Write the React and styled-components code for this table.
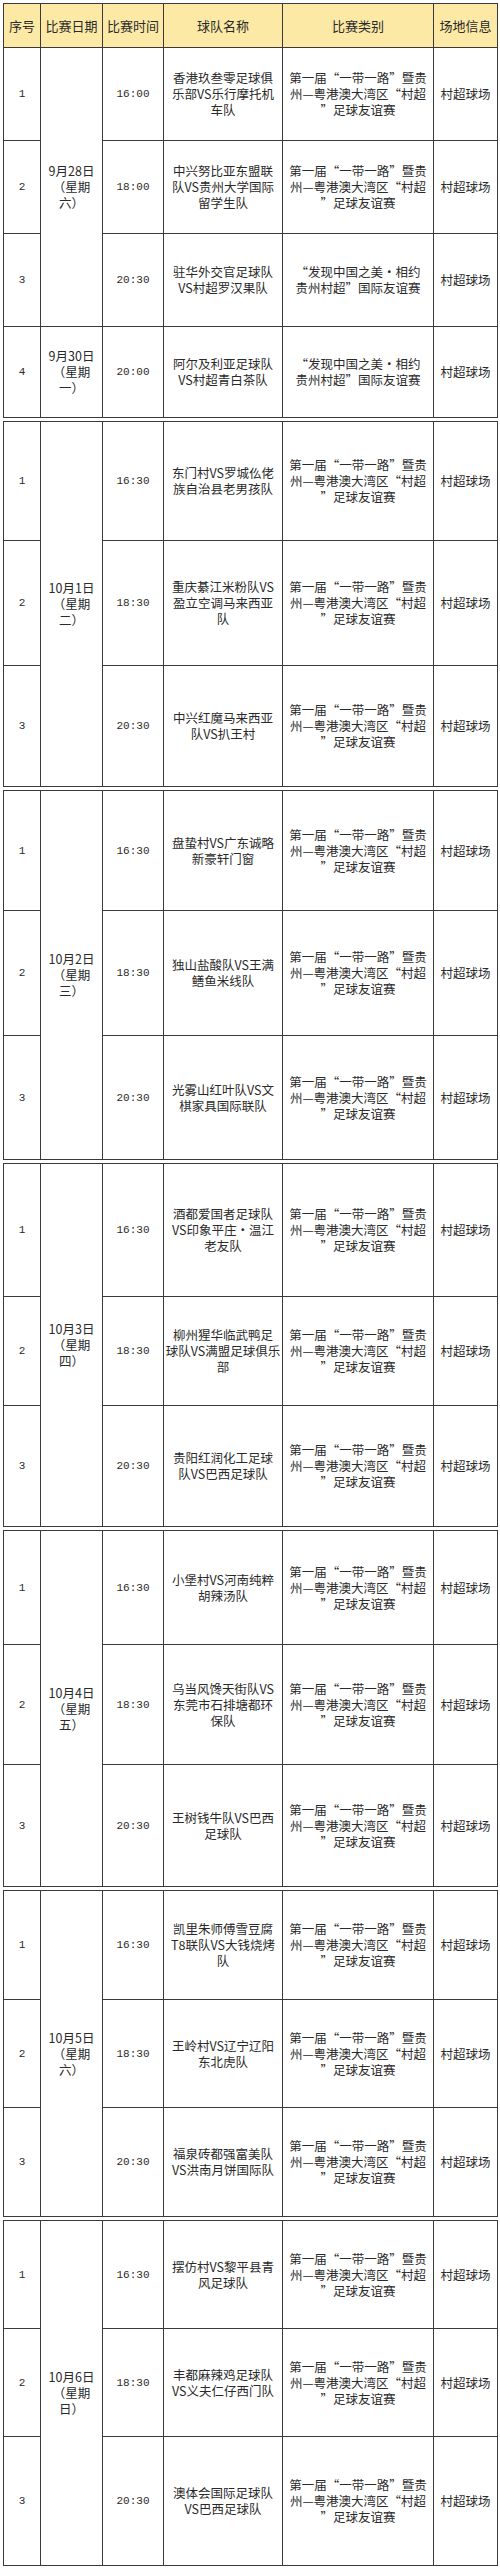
import React from "react";
import styled, { createGlobalStyle } from "styled-components";

const GlobalStyle = createGlobalStyle`
  html, body {
    margin: 0;
    padding: 0;
    background: #fff;
  }
  body {
    font-family: "Noto Sans CJK SC", "Liberation Sans", sans-serif;
    color: #2a2a2a;
  }
`;

const CAT_A = "第一届“一带一路”暨贵\n州—粤港澳大湾区“村超\n”足球友谊赛";
const CAT_B = "“发现中国之美·相约\n贵州村超”国际友谊赛";
const VENUE = "村超球场";

const sections = [
  {
    header: true,
    rows: [93, 93, 93, 91],
    groups: [
      {
        date: "9月28日\n（星期\n六）",
        matches: [
          ["1", "16:00", "香港玖叁零足球俱\n乐部VS乐行摩托机\n车队", CAT_A],
          ["2", "18:00", "中兴努比亚东盟联\n队VS贵州大学国际\n留学生队", CAT_A],
          ["3", "20:30", "驻华外交官足球队\nVS村超罗汉果队", CAT_B],
        ],
      },
      {
        date: "9月30日\n（星期\n一）",
        matches: [["4", "20:00", "阿尔及利亚足球队\nVS村超青白茶队", CAT_B]],
      },
    ],
  },
  {
    rows: [119, 125, 121],
    groups: [
      {
        date: "10月1日\n（星期\n二）",
        matches: [
          ["1", "16:30", "东门村VS罗城仫佬\n族自治县老男孩队", CAT_A],
          ["2", "18:30", "重庆綦江米粉队VS\n盈立空调马来西亚\n队", CAT_A],
          ["3", "20:30", "中兴红魔马来西亚\n队VS扒王村", CAT_A],
        ],
      },
    ],
  },
  {
    rows: [120, 125, 124],
    groups: [
      {
        date: "10月2日\n（星期\n三）",
        matches: [
          ["1", "16:30", "盘蛰村VS广东诚略\n新豪轩门窗", CAT_A],
          ["2", "18:30", "独山盐酸队VS王满\n鳝鱼米线队", CAT_A],
          ["3", "20:30", "光雾山红叶队VS文\n棋家具国际联队", CAT_A],
        ],
      },
    ],
  },
  {
    rows: [133, 109, 121],
    groups: [
      {
        date: "10月3日\n（星期\n四）",
        matches: [
          ["1", "16:30", "酒都爱国者足球队\nVS印象平庄·温江\n老友队", CAT_A],
          ["2", "18:30", "柳州猩华临武鸭足\n球队VS满盟足球俱乐\n部", CAT_A],
          ["3", "20:30", "贵阳红润化工足球\n队VS巴西足球队", CAT_A],
        ],
      },
    ],
  },
  {
    rows: [114, 120, 122],
    groups: [
      {
        date: "10月4日\n（星期\n五）",
        matches: [
          ["1", "16:30", "小堡村VS河南纯粹\n胡辣汤队", CAT_A],
          ["2", "18:30", "乌当风馋天街队VS\n东莞市石排塘都环\n保队", CAT_A],
          ["3", "20:30", "王树钱牛队VS巴西\n足球队", CAT_A],
        ],
      },
    ],
  },
  {
    rows: [109, 108, 109],
    groups: [
      {
        date: "10月5日\n（星期\n六）",
        matches: [
          ["1", "16:30", "凯里朱师傅雪豆腐\nT8联队VS大钱烧烤\n队", CAT_A],
          ["2", "18:30", "王岭村VS辽宁辽阳\n东北虎队", CAT_A],
          ["3", "20:30", "福泉砖都强富美队\nVS洪南月饼国际队", CAT_A],
        ],
      },
    ],
  },
  {
    rows: [108, 108, 129],
    groups: [
      {
        date: "10月6日\n（星期\n日）",
        matches: [
          ["1", "16:30", "摆仿村VS黎平县青\n风足球队", CAT_A],
          ["2", "18:30", "丰都麻辣鸡足球队\nVS义夫仁仔西门队", CAT_A],
          ["3", "20:30", "澳体会国际足球队\nVS巴西足球队", CAT_A],
        ],
      },
    ],
  },
];

const HEADS = ["序号", "比赛日期", "比赛时间", "球队名称", "比赛类别", "场地信息"];

const App = () => {
  return (
    <Page>
      <GlobalStyle />
      {sections.map((section, si) => (
        <Section
          key={si}
          $rows={(section.header ? "44px " : "") + section.rows.map((h) => `${h}px`).join(" ")}
        >
          {section.header &&
            HEADS.map((h) => (
              <HeadCell key={h}>{h}</HeadCell>
            ))}
          {section.groups.map((group, gi) =>
            group.matches.map((m, mi) => (
              <React.Fragment key={`${gi}-${mi}`}>
                <Cell $mono>{m[0]}</Cell>
                {mi === 0 && (
                  <DateCell $span={group.matches.length}>{group.date}</DateCell>
                )}
                <Cell $mono>{m[1]}</Cell>
                <Cell>{m[2]}</Cell>
                <Cell>{m[3]}</Cell>
                <Cell>{VENUE}</Cell>
              </React.Fragment>
            ))
          )}
        </Section>
      ))}
    </Page>
  );
};

const Page = styled.div`
  display: flex;
  flex-direction: column;
  gap: 3px;
  padding: 3px 0 0 3px;
  width: 495px;
`;

const Section = styled.div`
  display: grid;
  grid-template-columns: 37px 62px 61px 119px 151px 64px;
  grid-template-rows: ${(p) => p.$rows};
  border-left: 1px solid #3a3a3a;
  border-top: 1px solid #3a3a3a;
`;

const Cell = styled.div`
  display: flex;
  align-items: center;
  justify-content: center;
  text-align: center;
  white-space: pre;
  border-right: 1px solid #3a3a3a;
  border-bottom: 1px solid #3a3a3a;
  font-family: ${(p) =>
    p.$mono
      ? `"Liberation Mono", "Noto Sans CJK SC", monospace`
      : `"Noto Sans CJK SC", "Liberation Sans", sans-serif`};
  font-size: ${(p) => (p.$mono ? "11px" : "12.5px")};
  line-height: 16px;
  color: #2a2a2a;
  overflow: hidden;
`;

const DateCell = styled(Cell)`
  grid-row: span ${(p) => p.$span};
  font-size: 12.5px;
`;

const HeadCell = styled(Cell)`
  background: #fce9a6;
  font-size: 13px;
`;

export default App;
